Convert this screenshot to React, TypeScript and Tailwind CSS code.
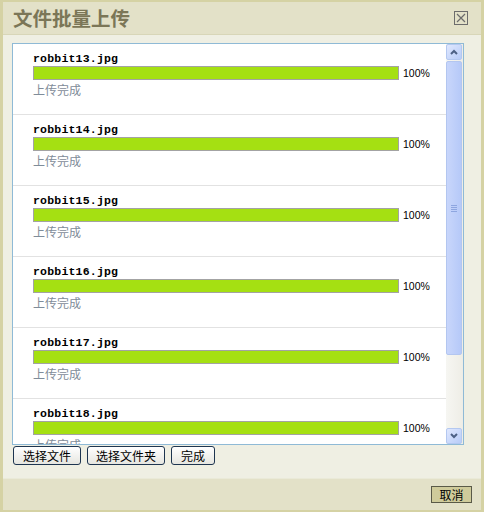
import React from "react";

const rows = [13, 14, 15, 16, 17, 18];

function Row({ n }: { n: number }) {
  return (
    <div className="h-[71px] shrink-0 border-b border-[#e2e2e2] pl-[20px] pt-[7px]">
      <div className="h-[15px] text-[11.5px] font-bold leading-[15px] text-black tracking-[0.2px]" style={{ fontFamily: '"Liberation Mono", "Noto Sans CJK SC", monospace' }}>
        robbit{n}.jpg
      </div>
      <div className="flex items-center">
        <div className="h-[14px] w-[366px] border border-[#a3a3a3] bg-[#a5e012]" />
        <span className="ml-[4px] text-[10.5px] leading-[14px] text-black" style={{ fontFamily: '"Liberation Sans", sans-serif' }}>100%</span>
      </div>
      <div className="mt-[2px] text-[12px] leading-[16px] text-[#7f8c99]" style={{ fontFamily: '"Noto Sans CJK SC", sans-serif' }}>
        上传完成
      </div>
    </div>
  );
}

function ScrollBtn({ up }: { up: boolean }) {
  return (
    <div className="flex h-[16px] w-[16px] items-center justify-center rounded-[2px] border border-[#b4c8f0] bg-gradient-to-br from-[#e0e8fe] to-[#b8ccf8]">
      <svg width="8" height="6" viewBox="0 0 8 6">
        <path d={up ? "M1 5 L4 2 L7 5" : "M1 1 L4 4 L7 1"} stroke="#4d6185" strokeWidth="2" fill="none" />
      </svg>
    </div>
  );
}

export default function App() {
  const cn = '"Noto Sans CJK SC", sans-serif';
  return (
    <div className="flex h-[512px] w-[484px] flex-col border-x-[3px] border-y-[2px] border-[#d5d2a4] bg-[#efefe3]" style={{ fontFamily: cn }}>
      <div className="flex h-[33px] shrink-0 items-center justify-between border-b border-[#d8d6b8] bg-[#e3e1c8] pl-[10px] pr-[13px]">
        <span className="text-[19.5px] font-bold leading-[20px] text-[#7b7657]" style={{ fontFamily: cn }}>文件批量上传</span>
        <svg width="14" height="14" viewBox="0 0 14 14">
          <rect x="0.5" y="0.5" width="13" height="13" fill="none" stroke="#6c6c6c" />
          <path d="M3 3 L11 11 M11 3 L3 11" stroke="#6c6c6c" strokeWidth="1.2" />
        </svg>
      </div>
      <div className="flex flex-1 flex-col pl-[9px] pt-[8px]">
        <div className="flex h-[402px] w-[452px] border border-[#8fbad6] bg-white">
          <div className="flex h-full flex-1 flex-col overflow-hidden">
            {rows.map((n) => (
              <Row key={n} n={n} />
            ))}
          </div>
          <div className="flex h-full w-[17px] flex-col bg-gradient-to-r from-[#f6f6f2] to-[#eeede6] pr-[1px]">
            <ScrollBtn up />
            <div className="mt-[1px] flex h-[294px] w-[16px] items-center justify-center rounded-[2px] border border-[#b3c6f0] bg-gradient-to-r from-[#c8d6fb] to-[#b6c9f8]">
              <div className="flex flex-col gap-[1px]">
                <div className="h-[1px] w-[6px] bg-[#8ea6e0]" />
                <div className="h-[1px] w-[6px] bg-[#8ea6e0]" />
                <div className="h-[1px] w-[6px] bg-[#8ea6e0]" />
                <div className="h-[1px] w-[6px] bg-[#8ea6e0]" />
              </div>
            </div>
            <div className="flex-1" />
            <ScrollBtn up={false} />
          </div>
        </div>
        <div className="mt-[1px] flex gap-[6px] pl-[1px]">
          {["选择文件", "选择文件夹", "完成"].map((t, i) => (
            <button
              key={t}
              className={`h-[19px] rounded-[3px] border border-[#1e3550] bg-gradient-to-b from-white to-[#e6e6e0] text-[12px] leading-[16px] text-black ${i === 0 ? "w-[68px]" : i === 1 ? "w-[78px]" : "w-[44px]"}`}
              style={{ fontFamily: cn }}
            >
              {t}
            </button>
          ))}
        </div>
      </div>
      <div className="flex h-[32px] shrink-0 items-center justify-end border-t border-[#eaead8] bg-[#e3e1c8] pr-[9px]">
        <button className="h-[17px] w-[41px] border border-[#5a5a48] bg-[#cfcb9b] text-[12px] leading-[14px] text-black" style={{ fontFamily: cn }}>
          取消
        </button>
      </div>
    </div>
  );
}
